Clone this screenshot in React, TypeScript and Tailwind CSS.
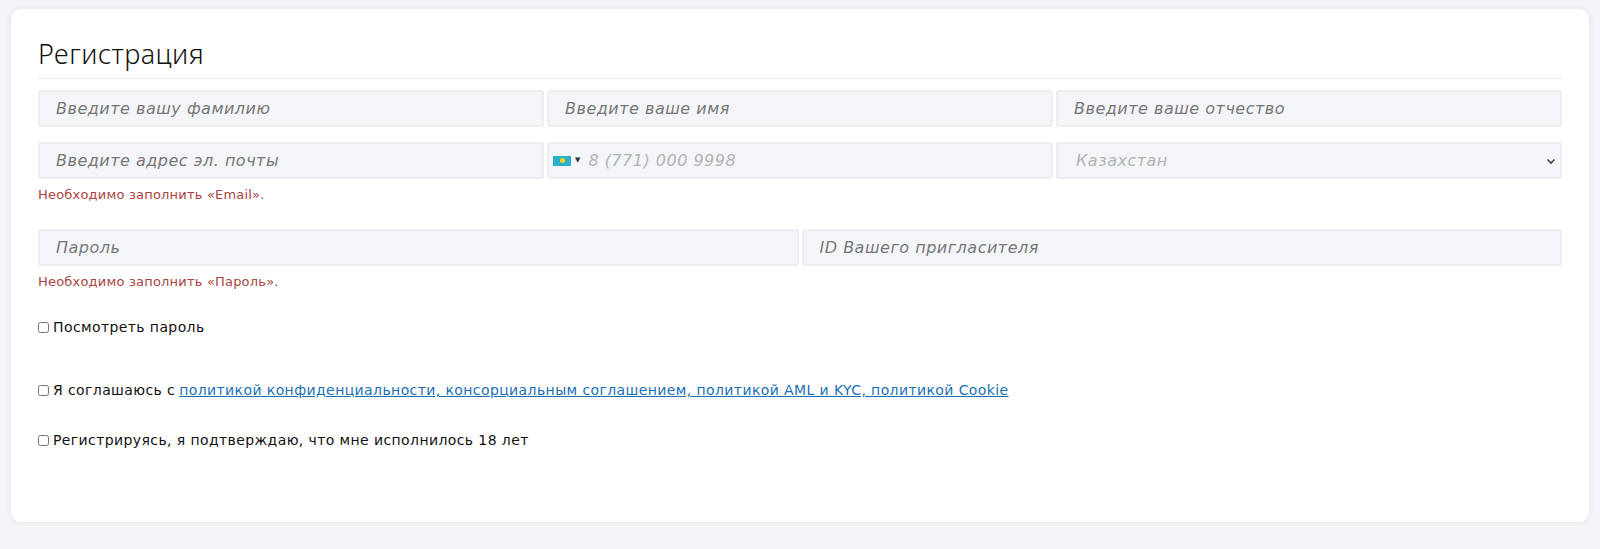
import React from "react";

const inp = "h-[37px] w-full rounded-[3px] border-2 border-[#eceef2] bg-[#f4f5f9] px-[16px] text-[16px] tracking-[0.5px] italic font-light text-[#555] placeholder:text-[#777] outline-none";

export default function App() {
  return (
    <div className="min-h-[549px] bg-[#f3f4f8] px-[11px] pt-[9px] pb-[27px]" style={{ fontFamily: "'DejaVu Sans', 'Noto Sans', sans-serif" }}>
      <div className="h-[513px] rounded-[10px] bg-white px-[27px] pt-[27px] shadow-[0_0_6px_rgba(0,0,0,0.08)]">
        <h1 className="text-[25px] tracking-[0.5px] font-extralight leading-[36px] text-[#111]" style={{ fontFamily: "'Noto Sans', sans-serif", fontWeight: 300, fontSize: 27 }}>Регистрация</h1>
        <div className="mt-[6px] border-t border-[#e9ebef]" />
        <div className="mt-[11px] grid grid-cols-3 gap-[3px]">
          <input className={inp} placeholder="Введите вашу фамилию" />
          <input className={inp} placeholder="Введите ваше имя" />
          <input className={inp} placeholder="Введите ваше отчество" />
        </div>
        <div className="mt-[15px] grid grid-cols-3 gap-[3px]">
          <input className={inp} placeholder="Введите адрес эл. почты" />
          <div className="flex h-[37px] items-center rounded-[3px] border-2 border-[#eceef2] bg-[#f4f5f9] pl-[4px]">
            <span className="relative inline-block h-[10px] w-[18px] bg-[#2ab0c8]">
              <span className="absolute left-[7px] top-[2px] h-[5px] w-[5px] rounded-full bg-[#f5d320]" />
            </span>
            <span className="ml-[4px] text-[7px] text-[#333]">▼</span>
            <input className="ml-[8px] h-full flex-1 bg-transparent text-[16px] tracking-[0.5px] italic font-light outline-none placeholder:text-[#b3b3b3]" placeholder="8 (771) 000 9998" />
          </div>
          <div className="flex h-[37px] items-center justify-between rounded-[3px] border-2 border-[#eceef2] bg-[#f4f5f9] px-[18px] pr-[4px]">
            <span className="text-[16px] tracking-[0.5px] italic font-light text-[#b3b3b3]">Казахстан</span>
            <svg width="10" height="10" viewBox="0 0 10 10"><path d="M1.5 3.5 5 7l3.5-3.5" fill="none" stroke="#444" strokeWidth="1.6" /></svg>
          </div>
        </div>
        <p className="mt-[6px] text-[13px] tracking-[0.2px] text-[#a94442]">Необходимо заполнить «Email».</p>
        <div className="mt-[24px] grid grid-cols-2 gap-[3px]">
          <input className={inp} placeholder="Пароль" />
          <input className={inp} placeholder="ID Вашего пригласителя" />
        </div>
        <p className="mt-[6px] text-[13px] tracking-[0.2px] text-[#a94442]">Необходимо заполнить «Пароль».</p>
        <label className="mt-[26px] flex items-center gap-[4px] text-[14px] tracking-[0.4px] text-[#111]">
          <input type="checkbox" className="h-[11px] w-[11px]" /> Посмотреть пароль
        </label>
        <label className="mt-[42px] flex items-center gap-[4px] text-[14px] tracking-[0.4px] text-[#111]">
          <input type="checkbox" className="h-[11px] w-[11px]" /> Я соглашаюсь с <a className="text-[#1a6fb5] underline" href="#">политикой конфиденциальности, консорциальным соглашением, политикой AML и KYC, политикой Cookie</a>
        </label>
        <label className="mt-[29px] flex items-center gap-[4px] text-[14px] tracking-[0.4px] text-[#111]">
          <input type="checkbox" className="h-[11px] w-[11px]" /> Регистрируясь, я подтверждаю, что мне исполнилось 18 лет
        </label>
      </div>
    </div>
  );
}
